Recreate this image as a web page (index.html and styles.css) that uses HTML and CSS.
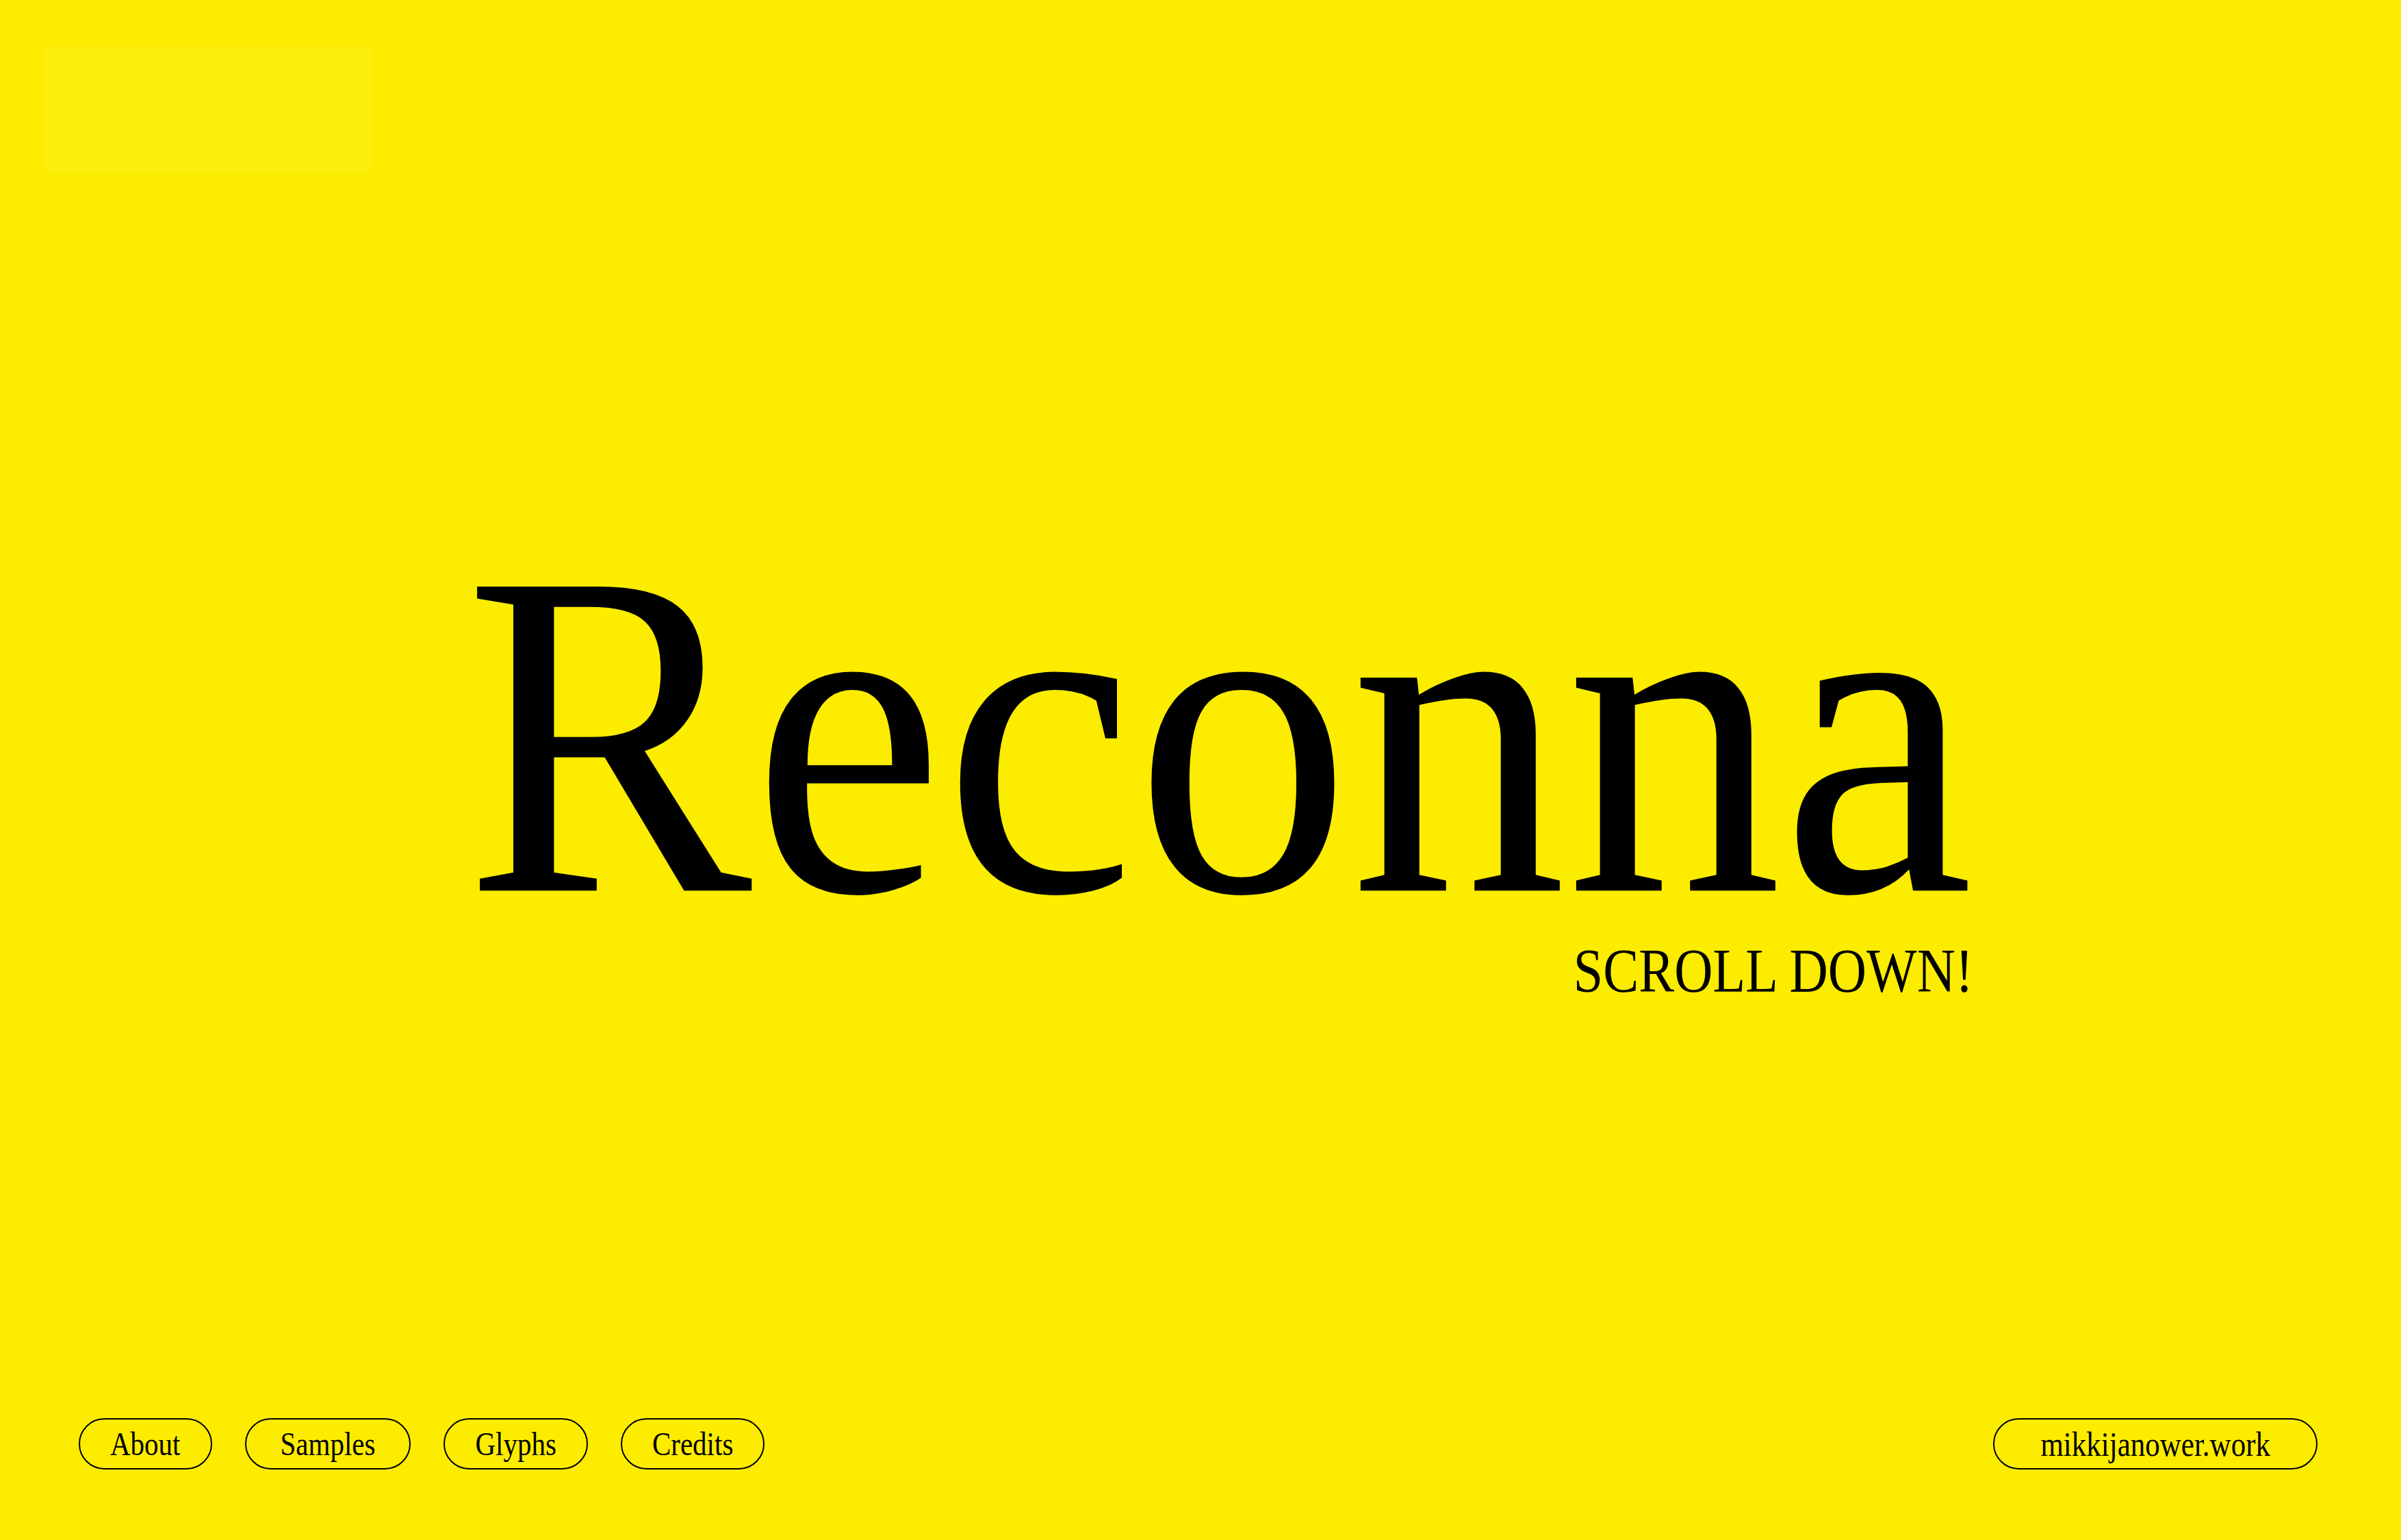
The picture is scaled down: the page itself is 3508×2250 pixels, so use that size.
FILE: index.html
```html
<!DOCTYPE html>
<html lang="en">
<head>
<meta charset="utf-8">
<title>Reconna</title>
<link rel="stylesheet" href="styles.css">
</head>
<body>
<div class="page">
  <header class="top">
    <div class="logo-slot"></div>
  </header>
  <main class="hero">
    <div class="hero-inner">
      <h1 class="title"><span class="title-text">Reconna</span></h1>
      <p class="scroll"><span class="scroll-text">SCROLL DOWN!</span></p>
    </div>
  </main>
  <footer class="bottom">
    <nav class="nav">
      <a class="pill" href="#about"><span class="pill-text">About</span></a>
      <a class="pill pill-wide" href="#samples"><span class="pill-text">Samples</span></a>
      <a class="pill" href="#glyphs"><span class="pill-text">Glyphs</span></a>
      <a class="pill" href="#credits"><span class="pill-text">Credits</span></a>
    </nav>
    <a class="pill pill-site" href="#site"><span class="pill-text">mikkijanower.work</span></a>
  </footer>
</div>
</body>
</html>
```
FILE: styles.css
```css
html, body {
  margin: 0;
  padding: 0;
  background: #fcec00;
}
body {
  font-family: "Liberation Serif", "Times New Roman", serif;
  color: #000;
}
.page {
  width: 3508px;
  height: 2250px;
  display: flex;
  flex-direction: column;
  overflow: hidden;
}
.top {
  padding: 68px 0 0 64px;
}
.logo-slot {
  width: 478px;
  height: 183px;
  background: #fbee0c;
}
.hero {
  flex: 1;
  display: flex;
  justify-content: center;
  align-items: flex-start;
  padding-top: 570px;
  padding-left: 54px;
}
.hero-inner {
  display: flex;
  flex-direction: column;
  align-items: flex-end;
}
.title {
  margin: 0;
  font-weight: 400;
  font-size: 630px;
  line-height: 0.8;
}
.title-text {
  display: inline-block;
  transform: scaleY(1.077);
}
.scroll {
  margin: 55px 0 0 0;
  font-size: 78px;
  line-height: 1;
}
.scroll-text {
  display: inline-block;
  transform: scaleY(1.157);
}
.bottom {
  display: flex;
  justify-content: space-between;
  align-items: center;
  padding: 0 122px 103px 115px;
}
.nav {
  display: flex;
  gap: 48px;
}
.pill {
  box-sizing: border-box;
  height: 75px;
  display: flex;
  align-items: center;
  padding: 0 44px;
  border: 2px solid #000;
  border-radius: 40px;
  color: #000;
  text-decoration: none;
  font-size: 41px;
  line-height: 1;
}
.pill-wide {
  padding: 0 50px;
}
.pill-text {
  display: inline-block;
  transform: scaleY(1.2);
}
.pill-site {
  font-size: 43px;
  padding: 0 67px;
}
```
